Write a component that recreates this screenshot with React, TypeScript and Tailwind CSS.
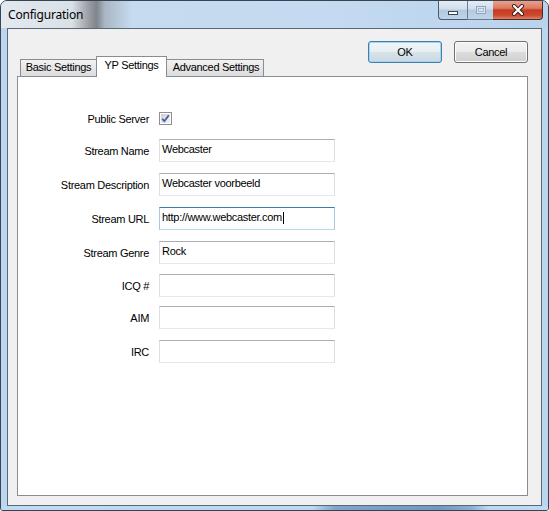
import React from 'react';

const UI = { fontFamily: '"Liberation Sans", Arial, sans-serif' };
const TITLE = { fontFamily: '"Noto Sans", "Open Sans", sans-serif' };

interface FieldRow {
    label: string;
    value: string;
    gap: string;
    focused?: boolean;
}

const FIELDS: FieldRow[] = [
    { label: 'Stream Name', value: 'Webcaster', gap: 'mt-[14px]' },
    { label: 'Stream Description', value: 'Webcaster voorbeeld', gap: 'mt-[11px]' },
    { label: 'Stream URL', value: 'http://www.webcaster.com', gap: 'mt-[11px]', focused: true },
    { label: 'Stream Genre', value: 'Rock', gap: 'mt-[11px]' },
    { label: 'ICQ #', value: '', gap: 'mt-[10px]' },
    { label: 'AIM', value: '', gap: 'mt-[9px]' },
    { label: 'IRC', value: '', gap: 'mt-[11px]' },
];

function CaptionButtons() {
    return (
        <div className="mr-[5px] flex h-[19px] self-start">
            <div className="flex h-full w-[29px] items-end justify-center rounded-bl-[4px] border border-t-0 border-r-0 border-[#4d5a69] bg-[linear-gradient(#e3ecf5_0%,#cfdeee_45%,#b3c9e0_50%,#bfd4ea_100%)] pb-[4px]">
                <div className="h-[4px] w-[10px] border border-[#3a4654] bg-white" />
            </div>
            <div className="flex h-full w-[26px] items-center justify-center border-b border-l border-[#6d7c8c] bg-[linear-gradient(#e3ecf5_0%,#cfdeee_45%,#b3c9e0_50%,#bfd4ea_100%)]">
                <div className="h-[8px] w-[10px] border border-[#93a6ba] bg-[#d9e4ef]">
                    <div className="mx-auto mt-[1px] h-[4px] w-[6px] border border-[#a9b9ca]" />
                </div>
            </div>
            <div className="flex h-full w-[50px] items-center justify-center rounded-br-[4px] border border-t-0 border-l-0 border-[#4d2a24] bg-[linear-gradient(#eba08c_0%,#dc7a62_40%,#c43b22_50%,#cc4a30_80%,#de8466_100%)]">
                <svg width="14" height="12" viewBox="0 0 14 12">
                    <path d="M3 2 L11 10 M11 2 L3 10" stroke="#3a1f1a" strokeWidth="4" strokeLinecap="round" />
                    <path d="M3 2 L11 10 M11 2 L3 10" stroke="#ffffff" strokeWidth="2.2" strokeLinecap="round" />
                </svg>
            </div>
        </div>
    );
}

function PushButton({ label, isDefault }: Readonly<{ label: string; isDefault?: boolean }>) {
    return (
        <div
            className={
                isDefault
                    ? 'flex h-[22px] w-[74px] items-center justify-center rounded-[3px] border border-[#3c7fb1] bg-[linear-gradient(#f0f5f8_0%,#e7eef2_50%,#d8e3ea_50%,#cad8e2_100%)] text-[11px] tracking-[-0.3px] text-black shadow-[inset_0_0_0_1px_#a6d4ef]'
                    : 'flex h-[22px] w-[74px] items-center justify-center rounded-[3px] border border-[#707070] bg-[linear-gradient(#f2f2f2_0%,#ebebeb_50%,#dddddd_50%,#cfcfcf_100%)] text-[11px] tracking-[-0.3px] text-black shadow-[inset_0_0_0_1px_#fcfcfc]'
            }
        >
            {label}
        </div>
    );
}

function Tabs() {
    return (
        <div className="ml-[3px] flex items-end self-end text-[11px] tracking-[-0.3px] text-black">
            <div className="flex h-[17px] w-[78px] justify-center border border-b-0 border-[#898c95] bg-[linear-gradient(#f2f2f2,#dcdcdc)] pt-[1px] pr-[1px] leading-[13px]">
                Basic Settings
            </div>
            <div className="relative z-10 -mb-px -ml-[2px] flex h-[21px] w-[71px] justify-center border border-b-0 border-[#898c95] bg-white pt-[2px] leading-[13px]">
                YP Settings
            </div>
            <div className="-ml-[2px] flex h-[17px] w-[99px] justify-center border border-b-0 border-[#898c95] bg-[linear-gradient(#f2f2f2,#dcdcdc)] pt-[1px] pl-[3px] leading-[13px]">
                Advanced Settings
            </div>
        </div>
    );
}

function CheckBox() {
    return (
        <div className="flex h-[13px] w-[13px] items-center justify-center border border-[#8e8f8f] bg-white p-[1px]">
            <div className="flex h-full w-full items-center justify-center bg-[linear-gradient(135deg,#cbcfd5,#f4f5f6)]">
                <svg width="9" height="9" viewBox="0 0 9 9">
                    <path d="M1.2 4.8 L3.4 7.2 L7.8 1.2" fill="none" stroke="#4a5f97" strokeWidth="1.8" />
                </svg>
            </div>
        </div>
    );
}

function TextBox({ value, focused }: Readonly<{ value: string; focused?: boolean }>) {
    return (
        <div
            className={
                focused
                    ? 'flex h-[23px] w-[176px] items-start border border-t-[#3d7bad] border-x-[#a4c9e3] border-b-[#b7d9ed] bg-white pl-[2px] pt-[3px] text-[11px] leading-[13px] tracking-[-0.3px]'
                    : 'flex h-[23px] w-[176px] items-start border border-t-[#abadb3] border-x-[#dbdfe6] border-b-[#e3e9ef] bg-white pl-[2px] pt-[3px] text-[11px] leading-[13px] tracking-[-0.3px]'
            }
        >
            <span>{value}</span>
            {focused && <span className="ml-[1px] mt-[1px] h-[12px] w-px bg-black" />}
        </div>
    );
}

export default function App() {
    return (
        <div className="h-[511px] w-[549px] bg-white">
            <div
                className="flex h-[511px] w-[549px] flex-col overflow-hidden rounded-t-[7px] rounded-b-[3px] border border-[#38444f] bg-[#bdd6ef]"
                style={UI}
            >
                <div className="flex h-[27px] items-start justify-between bg-[linear-gradient(90deg,#e2e9ef_0%,#d9e0e6_13%,#9a9fa4_16%,#7f858b_17.5%,#a9b7c4_19%,#c5dbef_24%,#c3daf0_60%,#bad3ec_100%)]">
                    <div className="ml-[7px] mt-[6px] text-[12px] leading-[16px] tracking-[-0.2px] text-black" style={TITLE}>
                        Configuration
                    </div>
                    <CaptionButtons />
                </div>

                <div className="mx-[6px] flex h-[478px] flex-col border border-[#5a6877] bg-[#f0f0f0] pl-[9px] pr-[13px]">
                    <div className="flex h-[47px] justify-between">
                        <Tabs />
                        <div className="mt-[12px] flex gap-[12px] self-start">
                            <PushButton label="OK" isDefault />
                            <PushButton label="Cancel" />
                        </div>
                    </div>

                    <div className="flex h-[420px] flex-col border border-[#898c95] bg-white text-[11px] leading-[13px] tracking-[-0.3px] text-black">
                        <div className="mt-[35px] flex h-[13px] items-center">
                            <div className="w-[131px] pt-[1px] text-right">Public Server</div>
                            <div className="ml-[10px]">
                                <CheckBox />
                            </div>
                        </div>
                        {FIELDS.map((f) => (
                            <div key={f.label} className={`${f.gap} flex h-[23px] items-center`}>
                                <div className="w-[131px] pt-[2px] text-right">{f.label}</div>
                                <div className="ml-[10px]">
                                    <TextBox value={f.value} focused={f.focused} />
                                </div>
                            </div>
                        ))}
                    </div>
                </div>

                <div className="h-[4px] bg-[linear-gradient(90deg,#c0daf3_0%,#bcd7f1_57%,#7ea6cc_61%,#6f99c2_80%,#88aed2_86%,#bcd7f1_89%,#c0daf3_100%)]" />
            </div>
        </div>
    );
}
